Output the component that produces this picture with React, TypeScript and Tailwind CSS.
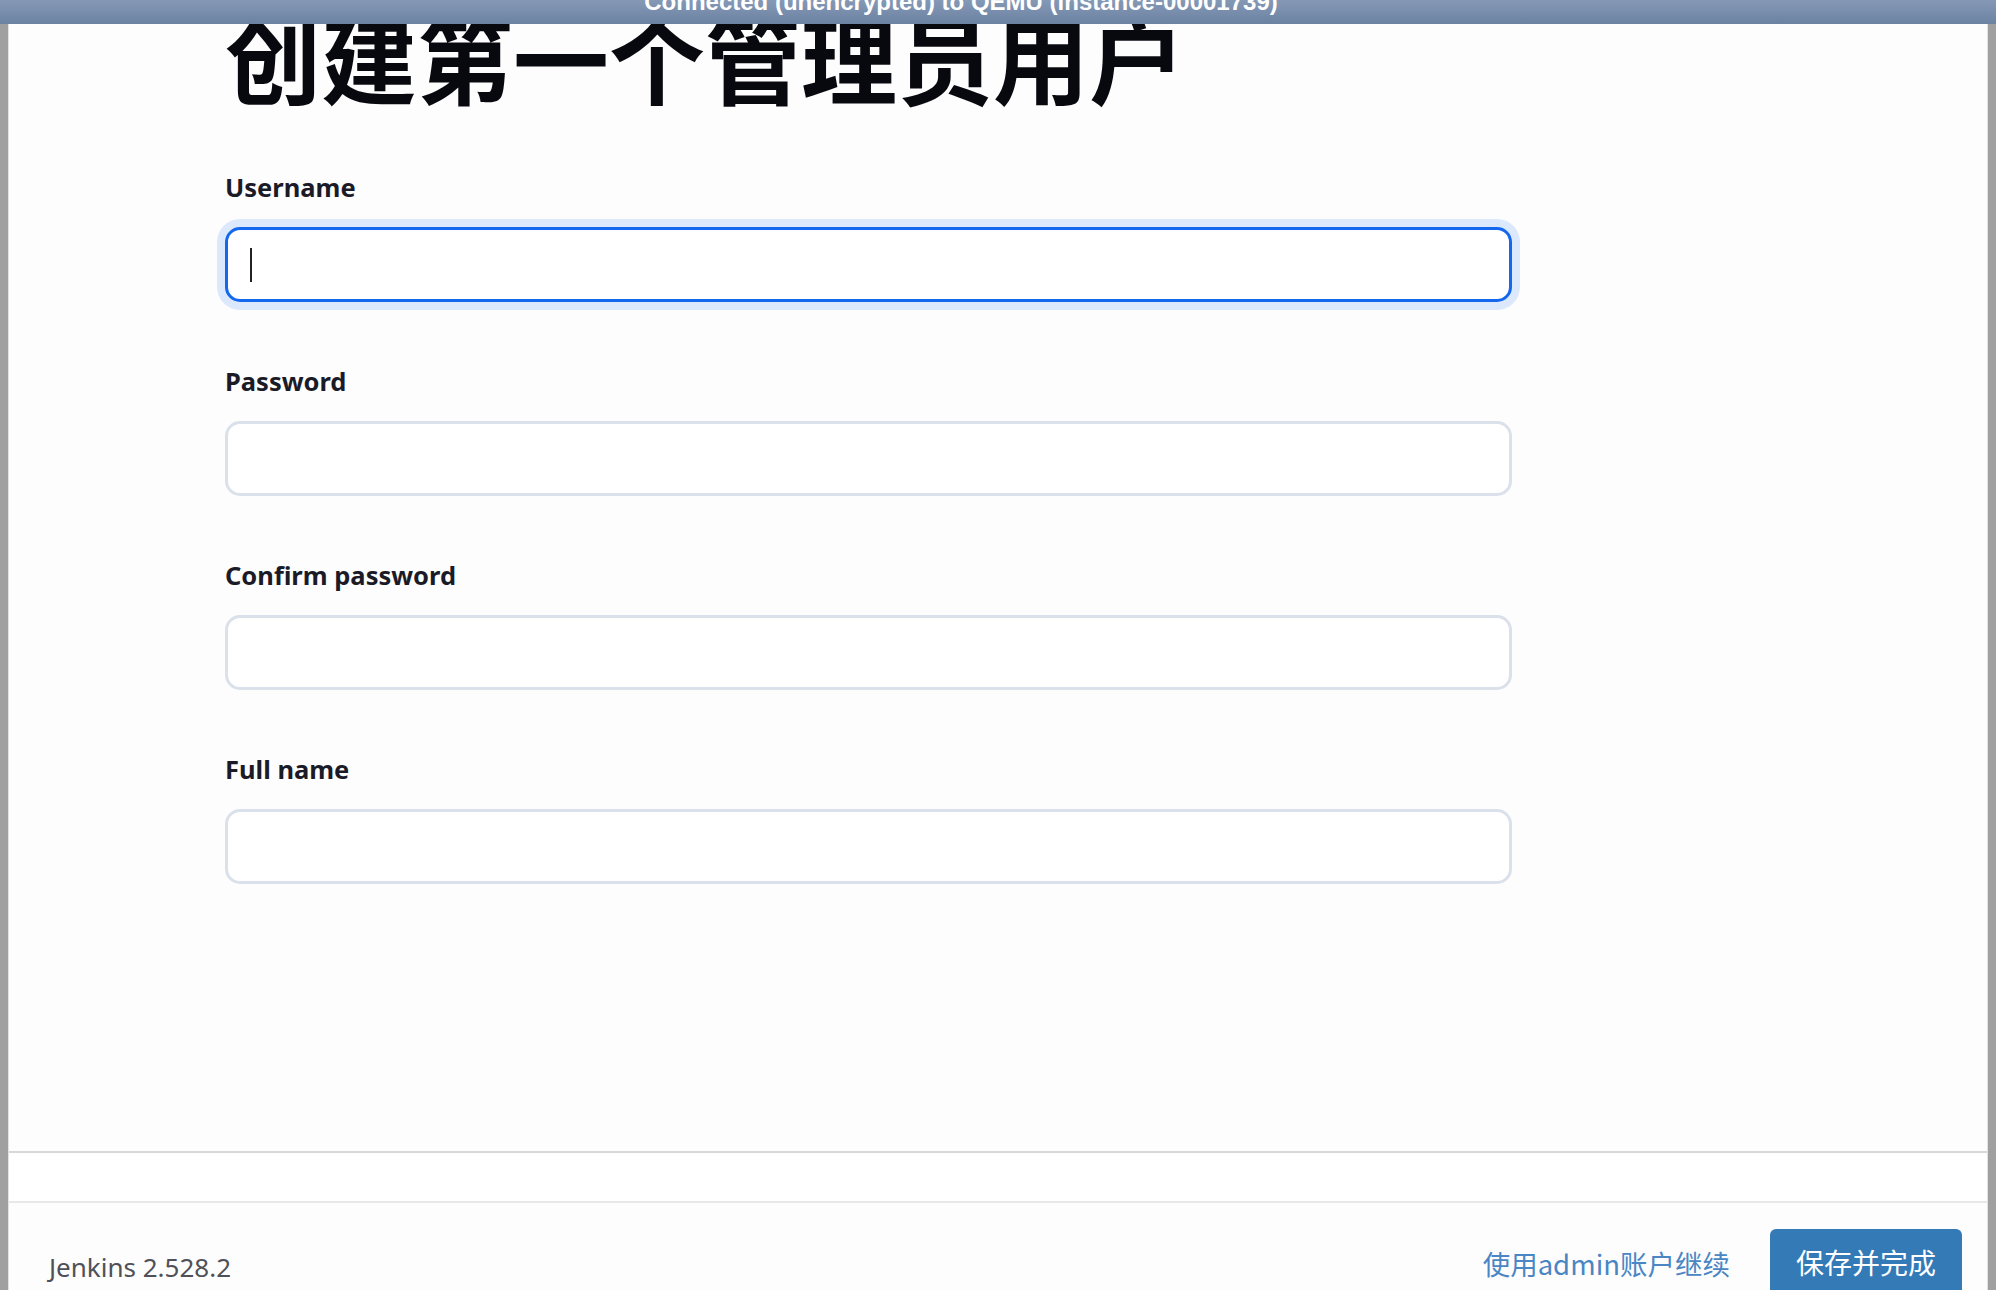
import React from "react";

const sans = '"Noto Sans", "Noto Sans CJK SC", sans-serif';
const cjk = '"Noto Sans CJK SC", "Noto Sans", sans-serif';

function Field({ label, focused }: { label: string; focused?: boolean }) {
  return (
    <div className="flex flex-col">
      <div
        className="h-[34px] text-[25.5px] leading-[34px] font-bold text-[#1b1b28] mb-[23px]"
        style={{ fontFamily: sans }}
      >
        {label}
      </div>
      {focused ? (
        <div className="h-[75px] w-[1287px] rounded-[15px] border-[3px] border-[#1468ee] bg-white shadow-[0_0_0_8px_#dce8fb] flex items-center pl-[22px]">
          <span className="block w-[2px] h-[34px] bg-[#222]" />
        </div>
      ) : (
        <div className="h-[75px] w-[1287px] rounded-[15px] border-[3px] border-[#dae1ea] bg-white" />
      )}
    </div>
  );
}

export default function App() {
  return (
    <div className="w-[1996px] h-[1290px] overflow-hidden flex flex-col bg-[#fdfdfd]">
      <div className="relative z-10 h-[24px] shrink-0 overflow-hidden bg-gradient-to-b from-[#8599b6] to-[#6c82a2] flex justify-center pr-[74px]">
        <span
          className="text-white font-bold text-[24px] leading-[24px] mt-[-10px] whitespace-nowrap"
          style={{ fontFamily: '"Liberation Sans", Arial, sans-serif' }}
        >
          Connected (unencrypted) to QEMU (instance-00001739)
        </span>
      </div>
      <div className="flex flex-1 min-h-0">
        <div className="w-[9px] shrink-0 bg-[#a0a0a0] border-r border-[#e2e2e2]" />
        <div className="flex-1 flex flex-col min-w-0">
          <div className="h-[1129px] shrink-0 border-b-2 border-[#d8d8d8] pl-[216px]">
            <h1
              className="mt-[-16px] text-[96px] leading-[95px] font-bold text-[#08080f] whitespace-nowrap"
              style={{ fontFamily: cjk }}
            >
              创建第一个管理员用户
            </h1>
            <div className="mt-[67px] flex flex-col gap-[62px]">
              <Field label="Username" focused />
              <Field label="Password" />
              <Field label="Confirm password" />
              <Field label="Full name" />
            </div>
          </div>
          <div className="h-[48px] shrink-0 bg-white" />
          <div className="flex-1 border-t-2 border-[#e8e8e8] bg-[#fdfdfd] flex items-start justify-between pl-[40px] pr-[25px] pt-[26px]">
            <span
              className="mt-[21px] text-[26px] leading-[34px] text-[#505058]"
              style={{ fontFamily: sans }}
            >
              Jenkins 2.528.2
            </span>
            <div className="flex items-start gap-[40px]">
              <span
                className="mt-[15px] text-[27.5px] leading-[38px] text-[#4a86c4]"
                style={{ fontFamily: cjk }}
              >
                使用admin账户继续
              </span>
              <div
                className="h-[66px] px-[26px] rounded-[6px] bg-[#337ab7] text-white text-[28px] leading-[66px]"
                style={{ fontFamily: cjk }}
              >
                保存并完成
              </div>
            </div>
          </div>
        </div>
        <div className="w-[9px] shrink-0 bg-[#a0a0a0] border-l border-[#e2e2e2]" />
      </div>
    </div>
  );
}
